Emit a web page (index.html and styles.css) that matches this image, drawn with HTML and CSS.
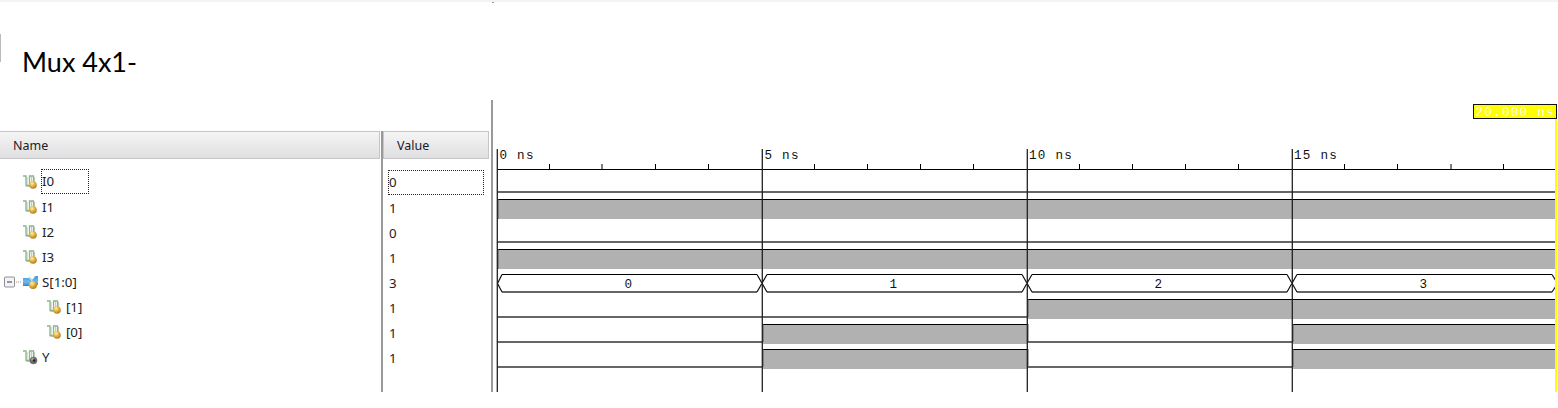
FILE: index.html
```html
<!DOCTYPE html>
<html lang="en">
<head>
<meta charset="utf-8">
<title>Mux 4x1</title>
<link rel="stylesheet" href="styles.css">
</head>
<body>
<svg class="defs" width="0" height="0">
  <defs>
    <radialGradient id="gold" cx=".38" cy=".3" r=".75"><stop offset="0" stop-color="#fff3b0"/><stop offset=".45" stop-color="#e6b440"/><stop offset="1" stop-color="#a8781c"/></radialGradient>
    <radialGradient id="dark" cx=".4" cy=".35" r=".75"><stop offset="0" stop-color="#bbb"/><stop offset=".45" stop-color="#666"/><stop offset="1" stop-color="#777"/></radialGradient>
    <linearGradient id="blue" x1="0" y1="0" x2="0" y2="1"><stop offset="0" stop-color="#3f9bdc"/><stop offset=".6" stop-color="#6fb9e8"/><stop offset="1" stop-color="#3486c8"/></linearGradient>
    <symbol id="wave" viewBox="0 0 16 16">
      <path d="M5 3V12.500H8M9.500 2V10M12.500 3V9" fill="none" stroke="#c3ccc0" stroke-width="1.200"/>
      <path d="M1 2H4V11.500H7.500V2H11.500V8" fill="none" stroke="#8db587" stroke-width="1.300"/>
    </symbol>
    <symbol id="signal" viewBox="0 0 16 16"><use href="#wave"/><circle cx="11" cy="11" r="3.800" fill="url(#gold)"/></symbol>
    <symbol id="output" viewBox="0 0 16 16"><use href="#wave"/><circle cx="11.500" cy="11.500" r="3.800" fill="url(#dark)"/><circle cx="12" cy="11.500" r="1.300" fill="#222"/></symbol>
    <symbol id="bus" viewBox="0 0 16 16">
      <path d="M1 4H7L10 7L13 2H16V11H13L10 9L7 12H1Z" fill="url(#blue)"/>
      <path d="M7 2.500L10 6L13 2.500" fill="none" stroke="#a6cdea"/>
      <circle cx="11" cy="11" r="4" fill="url(#gold)"/>
    </symbol>
  </defs>
</svg>
<header class="top"><span class="edge"></span><span class="speck"></span><h1 class="title">Mux 4x1-</h1></header>
<main class="viewer">
  <section class="names">
    <div class="head">Name</div>
    <div class="row"><svg class="icon"><use href="#signal"/></svg><span class="label focus">I0</span></div>
    <div class="row"><svg class="icon"><use href="#signal"/></svg><span class="label">I1</span></div>
    <div class="row"><svg class="icon"><use href="#signal"/></svg><span class="label">I2</span></div>
    <div class="row"><svg class="icon"><use href="#signal"/></svg><span class="label">I3</span></div>
    <div class="row group"><svg class="toggle" viewBox="0 0 18 12"><rect x=".5" y="1" width="10" height="10" rx="1" fill="#f4f4f4" stroke="#8f8f8f"/><path d="M3 6H8" stroke="#3b57a0" stroke-width="1.200"/><path d="M12 6H18" stroke="#999" stroke-dasharray="1 1"/></svg><svg class="icon"><use href="#bus"/></svg><span class="label">S[1:0]</span></div>
    <div class="row child"><svg class="icon"><use href="#signal"/></svg><span class="label">[1]</span></div>
    <div class="row child"><svg class="icon"><use href="#signal"/></svg><span class="label">[0]</span></div>
    <div class="row"><svg class="icon"><use href="#output"/></svg><span class="label">Y</span></div>
  </section>
  <section class="values">
    <div class="head">Value</div>
    <div class="row"><span class="value focus">0</span></div>
    <div class="row"><span class="value">1</span></div>
    <div class="row"><span class="value">0</span></div>
    <div class="row"><span class="value">1</span></div>
    <div class="row"><span class="value">3</span></div>
    <div class="row"><span class="value">1</span></div>
    <div class="row"><span class="value">1</span></div>
    <div class="row"><span class="value">1</span></div>
  </section>
  <svg class="chart" viewBox="493 100 1065 292">
    <g class="high">
      <path d="M498 199H1555V219H498ZM498 249H1555V269H498ZM1028 299H1555V319H1028ZM763 324H1028V344H763ZM1293 324H1555V344H1293ZM763 349H1028V369H763ZM1293 349H1555V369H1293Z"/>
    </g>
    <path class="line" d="M497 169.500H1555M497 199.500H1555M497 249.500H1555M1027 299.500H1555M762 324.500H1027M1292 324.500H1555M762 349.500H1027M1292 349.500H1555M502 274.500H757M767 274.500H1022M1032 274.500H1287M1297 274.500H1552"/>
    <path class="low" d="M497 192H1555M497 242H1555M502 292H757M767 292H1022M1032 292H1287M1297 292H1552M497 317H1027M497 342H762M1027 342H1292M497 367H762M1027 367H1292"/>
    <path class="edge-line" d="M498 199V219M498 249V269M1028 299V317M763 324V342M763 349V367M1028 324V342M1028 349V367M1293 324V342M1293 349V367"/>
    <path class="cross" d="M502 274.500L497.500 283.500L502 292M757 274.500L767 292M757 292L767 274.500M1022 274.500L1032 292M1022 292L1032 274.500M1287 274.500L1297 292M1287 292L1297 274.500M1552 274.500L1556 281M1552 292L1556 286"/>
    <path class="grid" d="M497.300 149V392M762.300 149V392M1027.300 149V392M1292.300 149V392"/>
    <path class="tick" d="M549.500 164V169M602 164V169M655.500 164V169M708.500 164V169M814.500 164V169M867.500 164V169M920.500 164V169M973.500 164V169M1079.500 164V169M1132.500 164V169M1185.500 164V169M1238.500 164V169M1344.500 164V169M1397.500 164V169M1451 164V169M1503.500 164V169"/>
    <g class="mono">
      <text x="499.500" y="159">0 ns</text><text x="764.500" y="159">5 ns</text><text x="1029" y="159">10 ns</text><text x="1294" y="159">15 ns</text>
      <text x="624.500" y="288">0</text><text x="889.500" y="288">1</text><text x="1154.500" y="288">2</text><text x="1419.500" y="288">3</text>
    </g>
    <rect class="cursor" x="1555" y="119" width="2" height="273"/>
    <rect class="marker" x="1473.500" y="104.500" width="83" height="14"/>
    <text class="mono marker-text" x="1475.500" y="116">20.000 ns</text>
  </svg>
</main>
</body>
</html>
```

FILE: styles.css
```css
* { box-sizing: border-box; }
body { margin: 0; height: 408px; overflow: hidden; background: #fff; color: #1c1c24; font: 13.3px/16px "Noto Sans", sans-serif; }
.defs { position: absolute; }
.top { position: relative; height: 100px; border-top: 2px solid #f4f4f4; padding: 40px 0 0 22px; }
.edge { position: absolute; left: 0; top: 32px; width: 1px; height: 28px; background: #bbb; }
.speck { position: absolute; left: 492px; top: 0; width: 2px; height: 1px; background: #999; }
.title { margin: 0; font: 400 27px/40px Lato, sans-serif; color: #000; }
.viewer { display: flex; height: 292px; }
.names { width: 381px; padding-top: 31px; }
.values { width: 110px; margin-top: 31px; border-left: 2px solid #999; }
.head { height: 28px; margin-bottom: 10px; padding: 5px 0 0 13px; border: 1px solid #c6c6c8; border-left: 0; background: linear-gradient(#f5f5f5, #dfdfe1); font-size: 12.5px; line-height: 17px; }
.names .head { width: 380px; }
.values .head { width: 106px; padding-left: 13px; border-left: 1px solid #c6c6c8; }
.row { display: flex; align-items: center; height: 25.1px; padding-left: 22px; }
.group { padding-left: 4px; }
.child { padding-left: 46px; }
.icon { width: 16px; height: 16px; flex: none; }
.toggle { width: 18px; height: 12px; flex: none; }
.label { margin-left: 3px; padding-left: 1px; }
.label.focus, .value.focus { height: 25px; line-height: 25px; outline: 1px dotted #222; outline-offset: -1px; }
.label.focus { width: 48px; }
.values .row { padding-left: 5px; position: relative; top: 1px; }
.value { padding-left: 1px; }
.value.focus { width: 96px; margin-left: 0; }
.chart { width: 1067px; height: 292px; border-left: 2px solid #999; flex: none; }
.high { fill: #b1b1b1; }
.line, .tick { stroke: #000; fill: none; }
.low { stroke: #666; stroke-width: 2; }
.edge-line { stroke: #555; stroke-width: 1; }
.cross { stroke: #111; fill: none; stroke-width: 1.2; }
.grid { stroke: #222; stroke-width: 1.3; }
.mono { font: 12.6px "Liberation Mono", monospace; letter-spacing: 1.25px; fill: #111; }
.cursor { fill: #ff0; }
.marker { fill: #ff0; stroke: #111; }
.marker-text { fill: #fff; }
```
